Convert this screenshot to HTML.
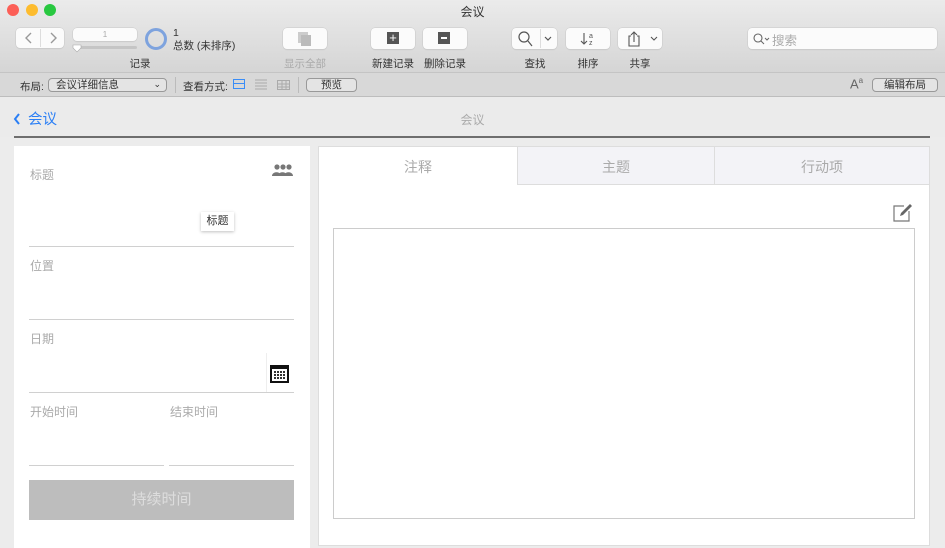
<!DOCTYPE html>
<html><head><meta charset="utf-8"><style>
*{margin:0;padding:0;box-sizing:border-box}
body{width:945px;height:548px;overflow:hidden;font-family:"Liberation Sans","Noto Sans CJK SC",sans-serif;background:#ececec;position:relative;font-size:11px;color:#333}
.a{position:absolute}
.tb{left:0;top:0;width:945px;height:73px;background:linear-gradient(#ebebeb,#d5d5d5);border-bottom:1px solid #c4c4c4}
.lb{left:0;top:73px;width:945px;height:24px;background:#d8d8d8;border-bottom:1px solid #bdbdbd}
.btn{background:#fbfbfb;border-radius:4px;box-shadow:0 0 0 0.5px #c8c8c8,0 1px 1px rgba(0,0,0,.08)}
.lbl{font-size:10.5px;color:#333;text-align:center}
.dot{width:12px;height:12px;border-radius:50%;top:4px}
.fl{color:#aaa;font-size:12px}
.ln{height:1px;background:#d0d0d0}
.tab{top:146px;height:39px;font-size:14px;color:#aaa;text-align:center;line-height:40px}
</style></head><body>
<div class="a tb"></div>
<div class="a dot" style="left:7px;background:#fc5f57"></div>
<div class="a dot" style="left:26px;background:#fdbc2e"></div>
<div class="a dot" style="left:44px;background:#28c840"></div>
<div class="a" style="left:0;width:945px;top:3px;text-align:center;font-size:12px;color:#333">会议</div>

<div class="a btn" style="left:16px;top:28px;width:48px;height:20px"></div>
<div class="a" style="left:40px;top:29px;width:1px;height:18px;background:#ddd"></div>
<svg class="a" style="left:22px;top:31px" width="40" height="14"><path d="M9 2 4 7 9 12M29 2 34 7 29 12" fill="none" stroke="#999" stroke-width="1.4"/></svg>
<div class="a btn" style="left:73px;top:28px;width:64px;height:13px;font-size:8px;color:#aaa;text-align:center;line-height:13px">1</div>
<div class="a" style="left:73px;top:46px;width:64px;height:3px;background:#c5c5c5;border-radius:2px"></div>
<svg class="a" style="left:72px;top:44px" width="10" height="9"><path d="M1 1h8v3l-4 4-4-4z" fill="#fff" stroke="#aaa" stroke-width=".6"/></svg>
<div class="a" style="left:145px;top:28px;width:22px;height:22px;border-radius:50%;border:3px solid #7ea3de"></div>
<div class="a" style="left:173px;top:27px;font-size:10.5px;line-height:13px">1<br>总数 (未排序)</div>
<div class="a lbl" style="left:110px;top:56px;width:60px">记录</div>

<div class="a btn" style="left:283px;top:28px;width:44px;height:21px"></div>
<div class="a" style="left:298px;top:32px;width:10px;height:11px;background:#ccc"></div>
<div class="a" style="left:301px;top:35px;width:10px;height:11px;background:#bbb"></div>
<div class="a lbl" style="left:275px;top:56px;width:60px;color:#aaa">显示全部</div>
<div class="a btn" style="left:371px;top:28px;width:44px;height:21px"></div>
<div class="a" style="left:387px;top:32px;width:12px;height:12px;background:#555;color:#fff;font-size:13px;line-height:12px;text-align:center">+</div>
<div class="a lbl" style="left:363px;top:56px;width:60px">新建记录</div>
<div class="a btn" style="left:423px;top:28px;width:44px;height:21px"></div>
<div class="a" style="left:438px;top:32px;width:12px;height:12px;background:#555"></div>
<div class="a" style="left:441px;top:37px;width:6px;height:1.5px;background:#fff"></div>
<div class="a lbl" style="left:415px;top:56px;width:60px">删除记录</div>

<div class="a btn" style="left:512px;top:28px;width:45px;height:21px"></div>
<div class="a" style="left:540px;top:29px;width:1px;height:19px;background:#ddd"></div>
<svg class="a" style="left:516px;top:30px" width="40" height="18"><circle cx="8" cy="7" r="5" fill="none" stroke="#555" stroke-width="1.2"/><path d="M12 11l4 5M29 7l3 3 3-3" fill="none" stroke="#555" stroke-width="1.2"/></svg>
<div class="a lbl" style="left:505px;top:56px;width:60px">查找</div>
<div class="a btn" style="left:566px;top:28px;width:44px;height:21px"></div>
<svg class="a" style="left:580px;top:30px" width="20" height="18"><path d="M4 3v11M1 11l3 3 3-3" fill="none" stroke="#555" stroke-width="1.1"/><text x="9" y="8" font-size="7" fill="#555">a</text><text x="9" y="15" font-size="7" fill="#555">z</text></svg>
<div class="a lbl" style="left:558px;top:56px;width:60px">排序</div>
<div class="a btn" style="left:618px;top:28px;width:44px;height:21px"></div>
<svg class="a" style="left:625px;top:30px" width="36" height="18"><path d="M6 6H4v10h10V6h-2M9 12V2M6 5l3-3 3 3M26 7l3 3 3-3" fill="none" stroke="#555" stroke-width="1.1"/></svg>
<div class="a lbl" style="left:610px;top:56px;width:60px">共享</div>

<div class="a btn" style="left:748px;top:28px;width:189px;height:21px"></div>
<svg class="a" style="left:752px;top:32px" width="20" height="14"><circle cx="6" cy="6" r="4" fill="none" stroke="#666" stroke-width="1.1"/><path d="M9 9l3 3M13 6l2 2 2-2" fill="none" stroke="#666" stroke-width="1"/></svg>
<div class="a" style="left:772px;top:30px;font-size:12.5px;color:#aaa">搜索</div>

<div class="a lb"></div>
<div class="a" style="left:20px;top:79px;font-size:10.5px">布局:</div>
<div class="a" style="left:48px;top:78px;width:119px;height:14px;border:1px solid #999;border-radius:4px;background:#e4e4e4;font-size:10.5px;line-height:13px;padding-left:7px">会议详细信息<span style="position:absolute;right:5px;top:-1px;font-size:9px">⌄</span></div>
<div class="a" style="left:175px;top:77px;width:1px;height:16px;background:#bbb"></div>
<div class="a" style="left:183px;top:79px;font-size:10.5px">查看方式:</div>
<div class="a" style="left:233px;top:79px;width:12px;height:10px;border:1.5px solid #3a8df7"></div>
<div class="a" style="left:233px;top:83px;width:12px;height:1px;background:#3a8df7"></div>
<svg class="a" style="left:254px;top:79px" width="40" height="12"><path d="M1 1h12M1 4h12M1 7h12M1 10h12" stroke="#aaa"/><rect x="23.5" y="1.5" width="12" height="9" fill="none" stroke="#aaa"/><path d="M24 5h11M24 8h11M28 2v8M32 2v8" stroke="#aaa"/></svg>
<div class="a" style="left:298px;top:77px;width:1px;height:16px;background:#bbb"></div>
<div class="a" style="left:306px;top:78px;width:51px;height:14px;border:1px solid #999;border-radius:4px;background:#e4e4e4;font-size:10.5px;line-height:13px;text-align:center">预览</div>
<div class="a" style="left:850px;top:76px;font-size:13px;color:#666">A<sup style="font-size:8px">a</sup></div>
<div class="a" style="left:872px;top:78px;width:66px;height:14px;border:1px solid #999;border-radius:4px;background:#e4e4e4;font-size:10.5px;line-height:13px;text-align:center">编辑布局</div>

<div class="a" style="left:0;top:97px;width:945px;height:40px;background:#ebebeb"></div>
<svg class="a" style="left:12px;top:112px" width="10" height="14"><path d="M7 2 3 7l4 5" fill="none" stroke="#2b7ff5" stroke-width="2"/></svg>
<div class="a" style="left:28px;top:108px;font-size:14.5px;color:#2b7ff5">会议</div>
<div class="a" style="left:0;width:945px;top:111px;text-align:center;font-size:12px;color:#aaa">会议</div>
<div class="a" style="left:14px;top:136px;width:916px;height:2px;background:#6e6e6e"></div>

<div class="a" style="left:14px;top:146px;width:296px;height:402px;background:#fff"></div>
<div class="a fl" style="left:30px;top:166px">标题</div>
<svg class="a" style="left:271px;top:163px" width="24" height="14"><g fill="#777"><circle cx="6" cy="4" r="2.6"/><circle cx="12" cy="4" r="2.6"/><circle cx="18" cy="4" r="2.6"/><path d="M1 13c0-5 9-5 9 0zM7 13c0-5 9-5 9 0zM13 13c0-5 9-5 9 0z"/></g></svg>
<div class="a" style="left:201px;top:212px;width:33px;height:19px;background:#fff;box-shadow:0 1px 3px rgba(0,0,0,.25);font-size:11px;line-height:19px;text-align:center">标题</div>
<div class="a ln" style="left:29px;top:246px;width:265px"></div>
<div class="a fl" style="left:30px;top:257px">位置</div>
<div class="a ln" style="left:29px;top:319px;width:265px"></div>
<div class="a fl" style="left:30px;top:330px">日期</div>
<div class="a" style="left:266px;top:353px;width:1px;height:39px;background:#eee"></div>
<svg class="a" style="left:270px;top:365px" width="19" height="18"><rect x="1" y="1" width="17" height="16" fill="#fff" stroke="#111" stroke-width="2"/><rect x="1" y="1" width="17" height="3" fill="#111"/><g fill="#333"><rect x="4" y="6" width="2" height="2"/><rect x="7" y="6" width="2" height="2"/><rect x="10" y="6" width="2" height="2"/><rect x="13" y="6" width="2" height="2"/><rect x="4" y="9" width="2" height="2"/><rect x="7" y="9" width="2" height="2"/><rect x="10" y="9" width="2" height="2"/><rect x="13" y="9" width="2" height="2"/><rect x="4" y="12" width="2" height="2"/><rect x="7" y="12" width="2" height="2"/><rect x="10" y="12" width="2" height="2"/><rect x="13" y="12" width="2" height="2"/></g></svg>
<div class="a ln" style="left:29px;top:392px;width:265px"></div>
<div class="a fl" style="left:30px;top:403px">开始时间</div>
<div class="a fl" style="left:170px;top:403px">结束时间</div>
<div class="a ln" style="left:29px;top:465px;width:135px"></div>
<div class="a ln" style="left:169px;top:465px;width:125px"></div>
<div class="a" style="left:29px;top:480px;width:265px;height:40px;background:#bdbdbd;color:#ddd;font-size:15px;text-align:center;line-height:40px">持续时间</div>

<div class="a" style="left:318px;top:146px;width:612px;height:400px;background:#fff;border:1px solid #ddd"></div>
<div class="a tab" style="left:318px;width:199px;background:#fff;border-left:1px solid #ddd;border-top:1px solid #ddd">注释</div>
<div class="a tab" style="left:517px;width:198px;background:#f3f3f7;border:1px solid #ddd">主题</div>
<div class="a tab" style="left:714px;width:216px;background:#f3f3f7;border:1px solid #ddd">行动项</div>
<svg class="a" style="left:892px;top:202px" width="24" height="20"><path d="M12 4H2v15h15V9" fill="none" stroke="#777" stroke-width="1.2"/><path d="M8 14l1-3 9-9 2 2-9 9z" fill="#666"/></svg>
<div class="a" style="left:333px;top:228px;width:582px;height:291px;border:1px solid #ccc"></div>
</body></html>
